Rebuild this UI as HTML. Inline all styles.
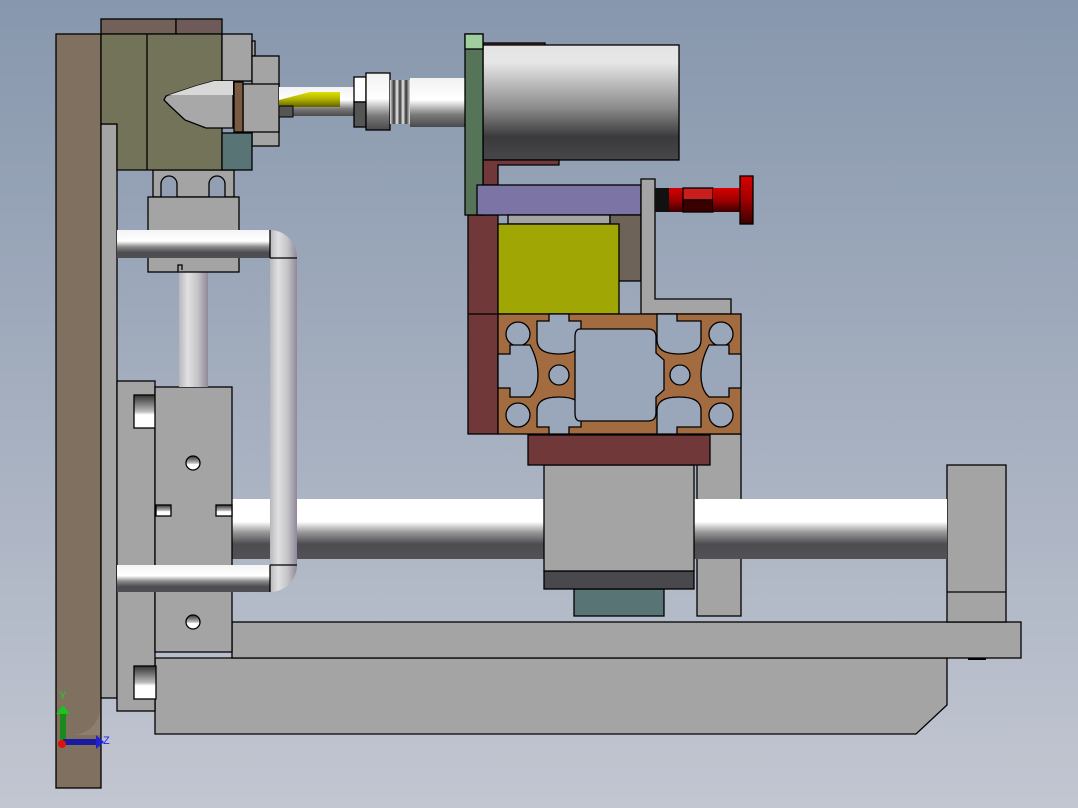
<!DOCTYPE html>
<html><head><meta charset="utf-8"><style>
html,body{margin:0;padding:0;width:1078px;height:808px;overflow:hidden}
svg{display:block}
</style></head><body>
<svg width="1078" height="808" viewBox="0 0 1078 808" xmlns="http://www.w3.org/2000/svg" stroke="#000" stroke-width="1.3">
<defs>
<linearGradient id="bg" x1="0" y1="0" x2="0" y2="1"><stop offset="0" stop-color="#8797ad"/><stop offset="1" stop-color="#c2c6d1"/></linearGradient>
<linearGradient id="hp" x1="0" y1="0" x2="0" y2="1"><stop offset="0" stop-color="#f4f4f4"/><stop offset=".4" stop-color="#ffffff"/><stop offset=".6" stop-color="#8a8a8a"/><stop offset=".8" stop-color="#4d4c50"/><stop offset="1" stop-color="#4f4e52"/></linearGradient>
<linearGradient id="rod" x1="0" y1="0" x2="0" y2="1"><stop offset="0" stop-color="#ffffff"/><stop offset=".38" stop-color="#ffffff"/><stop offset=".55" stop-color="#9a9a9a"/><stop offset=".75" stop-color="#4d4c50"/><stop offset="1" stop-color="#525156"/></linearGradient>
<linearGradient id="vp" x1="0" y1="0" x2="1" y2="0"><stop offset="0" stop-color="#b8b8bc"/><stop offset=".3" stop-color="#e0e0e2"/><stop offset=".65" stop-color="#c4c4c8"/><stop offset="1" stop-color="#908898"/></linearGradient>
<linearGradient id="mot" x1="0" y1="0" x2="0" y2="1"><stop offset="0" stop-color="#e4e4e4"/><stop offset=".15" stop-color="#e6e6e6"/><stop offset=".55" stop-color="#8a8a8a"/><stop offset=".8" stop-color="#3a3a3c"/><stop offset="1" stop-color="#47464a"/></linearGradient>
<linearGradient id="sh" x1="0" y1="0" x2="0" y2="1"><stop offset="0" stop-color="#f2f2f2"/><stop offset=".45" stop-color="#ffffff"/><stop offset=".75" stop-color="#7a7a7a"/><stop offset="1" stop-color="#4a494d"/></linearGradient>
<linearGradient id="yl" x1="0" y1="0" x2="0" y2="1"><stop offset="0" stop-color="#e0e000"/><stop offset=".5" stop-color="#b0b000"/><stop offset="1" stop-color="#606000"/></linearGradient>
<linearGradient id="rd" x1="0" y1="0" x2="0" y2="1"><stop offset="0" stop-color="#d80000"/><stop offset=".5" stop-color="#a00000"/><stop offset="1" stop-color="#3a0000"/></linearGradient>
<linearGradient id="hole" x1="0" y1="0" x2="0" y2="1"><stop offset="0" stop-color="#333"/><stop offset=".5" stop-color="#bbb"/><stop offset=".6" stop-color="#fff"/><stop offset="1" stop-color="#fff"/></linearGradient>
<linearGradient id="thr" x1="0" y1="0" x2="1" y2="0"><stop offset="0" stop-color="#ddd"/><stop offset=".2" stop-color="#333"/><stop offset=".35" stop-color="#eee"/><stop offset=".5" stop-color="#333"/><stop offset=".65" stop-color="#eee"/><stop offset=".8" stop-color="#333"/><stop offset="1" stop-color="#ddd"/></linearGradient>
</defs>
<rect width="1078" height="808" fill="url(#bg)" stroke="none"/>

<!-- base -->
<path d="M155 658 H947 V705 L916 734 H155 Z" fill="#a4a4a4"/>
<rect x="232" y="622" width="789" height="36" fill="#a4a4a4"/>
<rect x="968" y="658" width="18" height="2" fill="#000" stroke="none"/>
<rect x="947" y="465" width="59" height="157" fill="#a4a4a4"/>
<line x1="947" y1="592" x2="1006" y2="592"/>

<!-- rear gray plate under carriage -->
<rect x="697" y="434" width="44" height="182" fill="#a4a4a4"/>
<!-- big rod -->
<rect x="232" y="499" width="715" height="60" fill="url(#rod)" stroke="none"/>

<!-- carriage -->
<rect x="574" y="589" width="90" height="27" fill="#587474"/>
<rect x="544" y="571" width="150" height="18" fill="#49484c"/>
<rect x="544" y="465" width="150" height="106" fill="#a4a4a4"/>
<rect x="528" y="435" width="182" height="30" fill="#703838"/>

<!-- left column -->
<rect x="56" y="34" width="45" height="754" fill="#80705f"/>
<rect x="101" y="124" width="16" height="574" fill="#a4a4a4"/>
<rect x="117" y="381" width="38" height="330" fill="#a4a4a4"/>
<rect x="134" y="395" width="22" height="33" fill="url(#hole)"/>
<rect x="134" y="666" width="22" height="33" fill="url(#hole)"/>
<rect x="155" y="387" width="77" height="265" fill="#a4a4a4"/>
<rect x="156" y="505" width="15" height="11" fill="url(#hole)"/>
<rect x="216" y="505" width="16" height="11" fill="url(#hole)"/>
<circle cx="193" cy="463" r="7" fill="url(#hole)"/>
<circle cx="193" cy="622" r="7" fill="url(#hole)"/>

<!-- pipe frame -->
<rect x="179" y="270" width="29" height="117" fill="url(#vp)" stroke="none"/>
<rect x="270" y="258" width="27" height="307" fill="url(#vp)" stroke="none"/>
<path d="M270 230 A27 28 0 0 1 297 258 H270 Z" fill="url(#vp)" stroke="none"/>
<path d="M270 592 A27 27 0 0 0 297 565 H270 Z" fill="url(#vp)" stroke="none"/>
<line x1="270" y1="258" x2="297" y2="258"/>
<line x1="270" y1="565" x2="297" y2="565"/>

<!-- upper holder -->
<rect x="153" y="170" width="81" height="27" fill="#a4a4a4"/>
<path d="M161 197 V162 A8 8 0 0 1 177 162 V197 Z M209 197 V162 A8 8 0 0 1 225 162 V197 Z" fill="#93a0b3" transform="translate(0,22)"/>
<rect x="148" y="197" width="91" height="75" fill="#a4a4a4"/>
<path d="M178 272 V265 H182 V270" fill="#a4a4a4"/>
<rect x="117" y="230" width="153" height="28" fill="url(#hp)" stroke="none"/>
<line x1="270" y1="230" x2="270" y2="258"/>
<rect x="117" y="565" width="153" height="27" fill="url(#hp)" stroke="none"/>
<line x1="270" y1="565" x2="270" y2="592"/>

<!-- top tooling -->
<rect x="101" y="19" width="75" height="15" fill="#716158"/>
<rect x="176" y="19" width="46" height="15" fill="#6e5a58"/>
<path d="M101 34 H222 V170 H117 V124 H101 Z" fill="#737359"/>
<line x1="147" y1="34" x2="147" y2="170"/>
<rect x="222" y="34" width="30" height="47" fill="#a4a4a4"/>
<rect x="252" y="41" width="3" height="15" fill="#a4a4a4"/>
<rect x="252" y="56" width="27" height="90" fill="#a4a4a4"/>
<rect x="243" y="84" width="36" height="48" fill="#a4a4a4"/>
<rect x="222" y="133" width="30" height="37" fill="#587474"/>
<rect x="234" y="82" width="9" height="50" fill="#7a5a40"/>
<path d="M166 96 L196 86 L214 81 H233 V128 H206 L185 120 L170 106 L164 100 Z" fill="#a8a8a8"/>
<path d="M166 96 L196 86 L214 81 H233 V95 H170 Z" fill="#d8d8d8" stroke="none"/>

<!-- spindle -->
<rect x="279" y="87" width="75" height="29" fill="url(#sh)" stroke="none"/>
<path d="M279 100 L310 92 H340 V107 H279 Z" fill="url(#yl)" stroke="none"/>
<rect x="279" y="106" width="14" height="11" fill="#555" stroke-width="1"/>
<rect x="354" y="77" width="12" height="25" fill="#fff"/>
<rect x="354" y="102" width="12" height="25" fill="#555"/>
<rect x="366" y="73" width="24" height="57" fill="url(#sh)"/>
<rect x="390" y="80" width="20" height="44" fill="url(#thr)" stroke="none"/>
<rect x="410" y="78" width="56" height="49" fill="url(#sh)" stroke="none"/>

<!-- motor assembly -->
<rect x="483" y="43" width="62" height="4" fill="#703838"/>
<rect x="483" y="45" width="196" height="115" fill="url(#mot)"/>
<path d="M483 160 H559 V165 H498 V185 H483 Z" fill="#703838"/>
<rect x="468" y="215" width="30" height="219" fill="#703838"/>
<line x1="468" y1="314" x2="498" y2="314"/>
<rect x="465" y="34" width="18" height="181" fill="#567458"/>
<rect x="465" y="34" width="18" height="15" fill="#9fcf9f"/>
<rect x="477" y="185" width="164" height="30" fill="#7b74a5"/>
<rect x="508" y="215" width="102" height="9" fill="#a4a4a4"/>
<rect x="610" y="215" width="31" height="66" fill="#6e6358"/>
<rect x="498" y="224" width="121" height="90" fill="#a0a604"/>
<path d="M641 179 H655 V299 H731 V314 H641 Z" fill="#a4a4a4"/>

<!-- knob -->
<rect x="655" y="188" width="14" height="24" fill="#111" stroke="none"/>
<rect x="669" y="188" width="14" height="24" fill="url(#rd)" stroke="none"/>
<rect x="683" y="188" width="30" height="12" fill="#c81e1e"/>
<rect x="683" y="200" width="30" height="12" fill="#3a0000"/>
<rect x="713" y="188" width="27" height="24" fill="url(#rd)" stroke="none"/>
<rect x="740" y="176" width="13" height="48" fill="url(#rd)"/>

<!-- extrusion -->
<rect x="498" y="314" width="243" height="120" fill="#a36c40"/>
<g fill="#9aa6b9">
<circle cx="518" cy="334" r="12"/><circle cx="518" cy="415" r="12"/>
<circle cx="721" cy="334" r="12"/><circle cx="721" cy="415" r="12"/>
<circle cx="559" cy="375" r="10"/><circle cx="680" cy="375" r="10"/>
<path d="M549 314 H569 V321 H581 V340 Q581 354 559 354 Q537 354 537 340 V321 H549 Z"/>
<path d="M657 314 H677 V321 H701 V340 Q701 354 679 354 Q657 354 657 340 V321 Z" transform="translate(0,0)"/>
<path d="M549 434 H569 V427 H581 V410 Q581 397 559 397 Q537 397 537 410 V427 H549 Z"/>
<path d="M657 434 H677 V427 H701 V410 Q701 397 679 397 Q657 397 657 410 V427 Z"/>
<path d="M498 354 H510 V345 H530 Q538 360 538 375 Q538 390 530 397 H510 V388 H498 Z"/>
<path d="M741 354 H729 V345 H709 Q701 360 701 375 Q701 390 709 397 H729 V388 H741 Z"/>
<path d="M580 329 H648 Q656 329 656 337 V353 L664 360 V390 L656 397 V413 Q656 421 648 421 H580 Q575 421 575 413 V397 L575 390 V360 L575 353 V337 Q575 329 580 329 Z"/>
</g>

<!-- axis triad -->
<g stroke="none">
<path d="M74 735 A28 28 0 0 0 100 710 L100 735 Z" fill="#9a8c80" opacity=".5"/>
<rect x="60" y="713" width="6" height="30" fill="#1a8a1a"/>
<polygon points="56,714 63,705 70,714" fill="#1fc01f"/>
<rect x="63" y="739" width="33" height="6" fill="#1a1aa0"/>
<polygon points="96,735 104,742 96,749" fill="#2020d0"/>
<circle cx="62" cy="744" r="4" fill="#e01010"/>
</g>
<text x="59" y="699" font-family="Liberation Sans, sans-serif" font-size="11" fill="#20d020" stroke="none">Y</text>
<text x="103" y="744" font-family="Liberation Sans, sans-serif" font-size="11" fill="#2020ff" stroke="none">Z</text>
</svg>
</body></html>
